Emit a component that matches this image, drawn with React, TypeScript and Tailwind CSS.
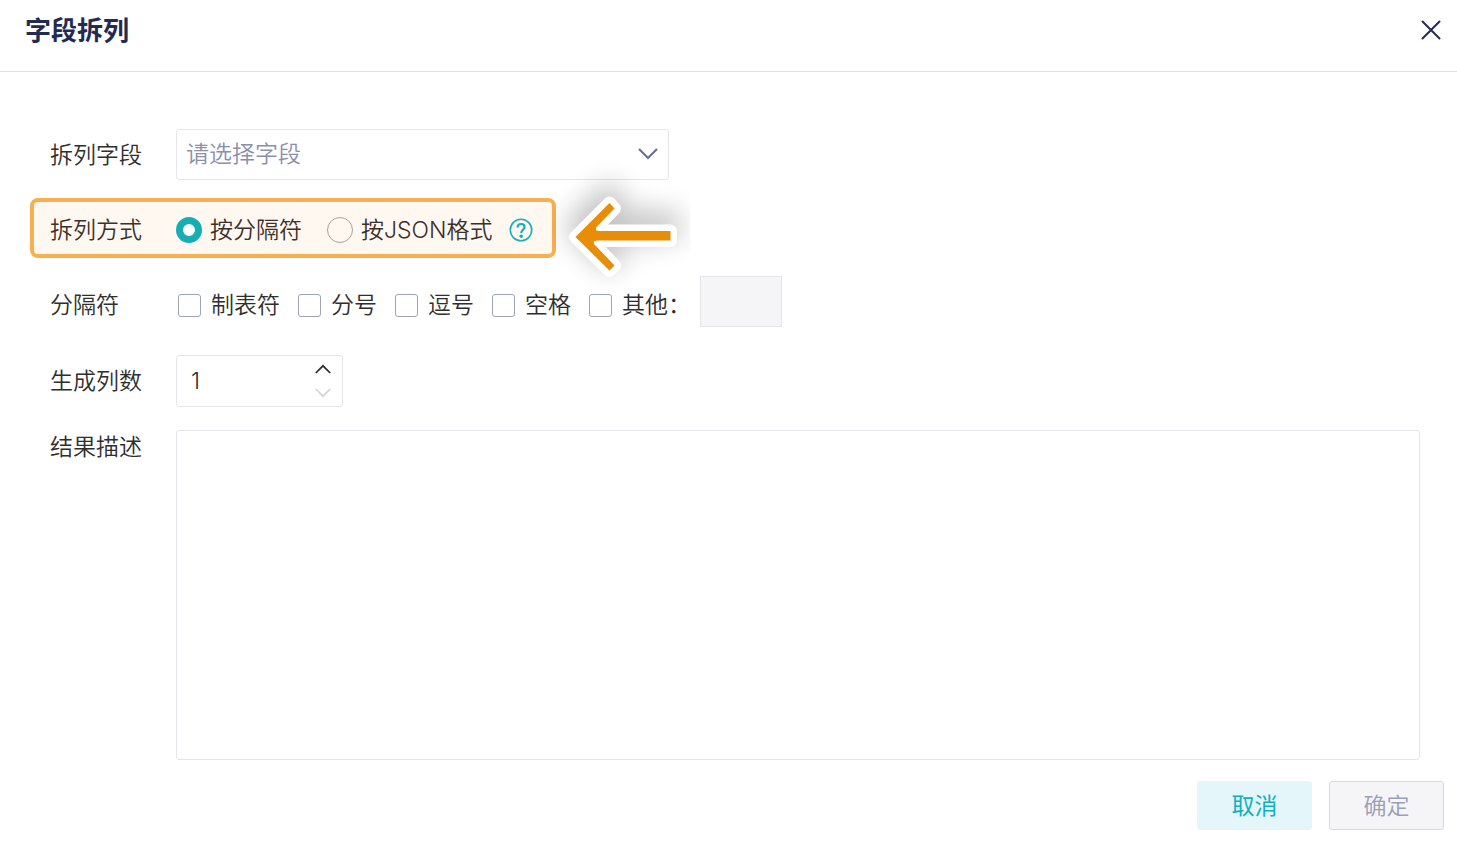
import { useState } from "react";
import type { ReactNode } from "react";

const delimiters = ["制表符", "分号", "逗号", "空格", "其他："];

const modes = [
  { value: "delimiter", label: "按分隔符" },
  { value: "json", label: "按JSON格式" },
];

function Chevron({ up = false, className }: { up?: boolean; className: string }) {
  return (
    <svg viewBox="0 0 20 12" fill="none" stroke="currentColor" className={className} aria-hidden="true">
      <path d={up ? "M1 11 10 2l9 9" : "M1 1l9 9 9-9"} strokeWidth="2.2" />
    </svg>
  );
}

function HelpIcon() {
  return (
    <svg viewBox="0 0 24 24" fill="none" stroke="currentColor" className="size-6" aria-hidden="true">
      <circle cx="12" cy="12" r="10.7" strokeWidth="1.6" />
      <path d="M8.6 9.4c0-2.100 1.400-3.400 3.500-3.400s3.500 1.300 3.500 3.100c0 2.500-3.400 2.800-3.400 6" strokeWidth="2.2" />
      <circle cx="12.200" cy="18.200" r="1.700" fill="currentColor" stroke="none" />
    </svg>
  );
}

const arrowPath =
  "M23.5 87 57.5 53l5 5.500-18 18.500q-2 4 2.500 4h71.500v9.500H45q-5 0-2.500 4l20 21-5 5z";

function PointerArrow() {
  return (
    <svg viewBox="0 0 138 150" className="pointer-events-none absolute -top-[52px] left-full h-[150px] w-[138px]" aria-hidden="true">
      <defs>
        <filter id="soft" x="-50%" y="-50%" width="200%" height="200%">
          <feGaussianBlur stdDeviation="14" />
        </filter>
      </defs>
      <path d={arrowPath} transform="translate(0 -10)" stroke="#000" strokeWidth="20" strokeLinejoin="round" opacity="0.24" filter="url(#soft)" />
      <path d={arrowPath} fill="#fff" stroke="#fff" strokeWidth="13" strokeLinejoin="round" />
      <path d={arrowPath} fill="#e88d08" />
    </svg>
  );
}

function Row({ label, htmlFor, className, children }: { label: string; htmlFor?: string; className: string; children: ReactNode }) {
  return (
    <div className={`flex pl-[50px] ${className}`}>
      <label htmlFor={htmlFor} className="w-[126px] shrink-0">{label}</label>
      {children}
    </div>
  );
}

export default function App() {
  const [mode, setMode] = useState("delimiter");
  const [count, setCount] = useState(1);

  return (
    <div className="bg-white font-['Inter','Noto_Sans_CJK_SC',sans-serif] text-[23px] leading-[34px] font-[350] text-[#2e2e2e]">
      <header className="flex h-[72px] items-start justify-between border-b border-[#dfe0e2] pt-3 pr-4 pl-[25px]">
        <h1 className="text-[26px] leading-[38px] font-bold text-[#232b54]">字段拆列</h1>
        <button type="button" aria-label="关闭" className="mt-2 text-[#232b54]">
          <svg viewBox="0 0 20 20" fill="none" stroke="currentColor" strokeWidth="2" strokeLinecap="round" className="size-5">
            <path d="m1.500 1.500 17 17M18.500 1.500l-17 17" />
          </svg>
        </button>
      </header>

      <form className="pt-[57px]" onSubmit={(e) => e.preventDefault()}>
        <Row label="拆列字段" htmlFor="field" className="items-center">
          <div className="relative w-[493px]">
            <select id="field" defaultValue="" className="block h-[51px] w-full appearance-none rounded-[3px] border border-[#e6e6ea] bg-white pr-12 pb-px pl-[9px] text-[#8b8fab]">
              <option value="">请选择字段</option>
            </select>
            <Chevron className="pointer-events-none absolute top-[19px] right-[11px] h-3 w-5 text-[#6b7090]" />
          </div>
        </Row>

        <div className="relative mt-[18px] ml-[30px] flex h-[60px] w-[526px] items-center rounded-lg border-4 border-[#f7b050] bg-[#fff8f1] pt-[3px] pl-4 text-[#3b302b]">
          <span id="mode-label" className="w-[126px] shrink-0">拆列方式</span>
          <div role="radiogroup" aria-labelledby="mode-label" className="flex items-center gap-[25px]">
            {modes.map((m) => (
              <label key={m.value} className="flex items-center gap-2 whitespace-nowrap">
                <input
                  type="radio"
                  name="mode"
                  checked={mode === m.value}
                  onChange={() => setMode(m.value)}
                  className="size-[26px] appearance-none rounded-full border border-[#a8a29f] checked:border-[7px] checked:border-[#16adb5] checked:bg-white"
                />
                {m.label}
              </label>
            ))}
          </div>
          <button type="button" aria-label="帮助" className="ml-4 text-[#16b0b8]">
            <HelpIcon />
          </button>
          <PointerArrow />
        </div>

        <Row label="分隔符" className="mt-[18px] items-end leading-[43px]">
          <div className="flex items-end gap-[18px] pl-[2px]">
            {delimiters.map((name) => (
              <label key={name} className="flex items-center gap-[10px] whitespace-nowrap">
                <input type="checkbox" className="size-[23px] appearance-none rounded-[3px] border border-[#9da3b8] bg-white checked:bg-[#16adb5]" />
                {name}
              </label>
            ))}
          </div>
          <input type="text" disabled aria-label="其他分隔符" className="ml-[9px] h-[51px] w-[82px] border border-[#e6e6ea] bg-[#f5f5f8] px-2" />
        </Row>

        <Row label="生成列数" htmlFor="count" className="mt-7 items-center">
          <div className="relative w-[167px]">
            <input
              id="count"
              type="number"
              min={1}
              value={count}
              onChange={(e) => setCount(Math.max(1, Number(e.target.value)))}
              className="block h-[52px] w-full [appearance:textfield] rounded-[3px] border border-[#e6e6ea] pr-10 pl-[14px] [&::-webkit-inner-spin-button]:appearance-none"
            />
            <div className="absolute inset-y-0 right-3 flex flex-col justify-center gap-[14px]">
              <button type="button" aria-label="增加" className="block" onClick={() => setCount(count + 1)}>
                <Chevron up className="h-[10px] w-4" />
              </button>
              <button type="button" aria-label="减少" disabled={count === 1} onClick={() => setCount(count - 1)} className="block disabled:text-[#d3d4e0]">
                <Chevron className="h-[10px] w-4" />
              </button>
            </div>
          </div>
        </Row>

        <Row label="结果描述" htmlFor="result" className="mt-[23px] items-start pr-[37px]">
          <textarea id="result" className="block h-[330px] min-w-0 flex-1 resize-none rounded-[3px] border border-[#e6e6ea] p-3" />
        </Row>

        <footer className="mt-[21px] flex justify-end gap-[17px] pr-[13px] pb-3">
          <button type="button" className="h-[49px] w-[115px] rounded-[3px] bg-[#e4f6f9] font-normal text-[#10b0bd]">取消</button>
          <button type="submit" disabled className="h-[49px] w-[115px] rounded-[3px] border border-[#d8d9e2] bg-[#f5f5f8] text-[#9c9fb5]">确定</button>
        </footer>
      </form>
    </div>
  );
}
